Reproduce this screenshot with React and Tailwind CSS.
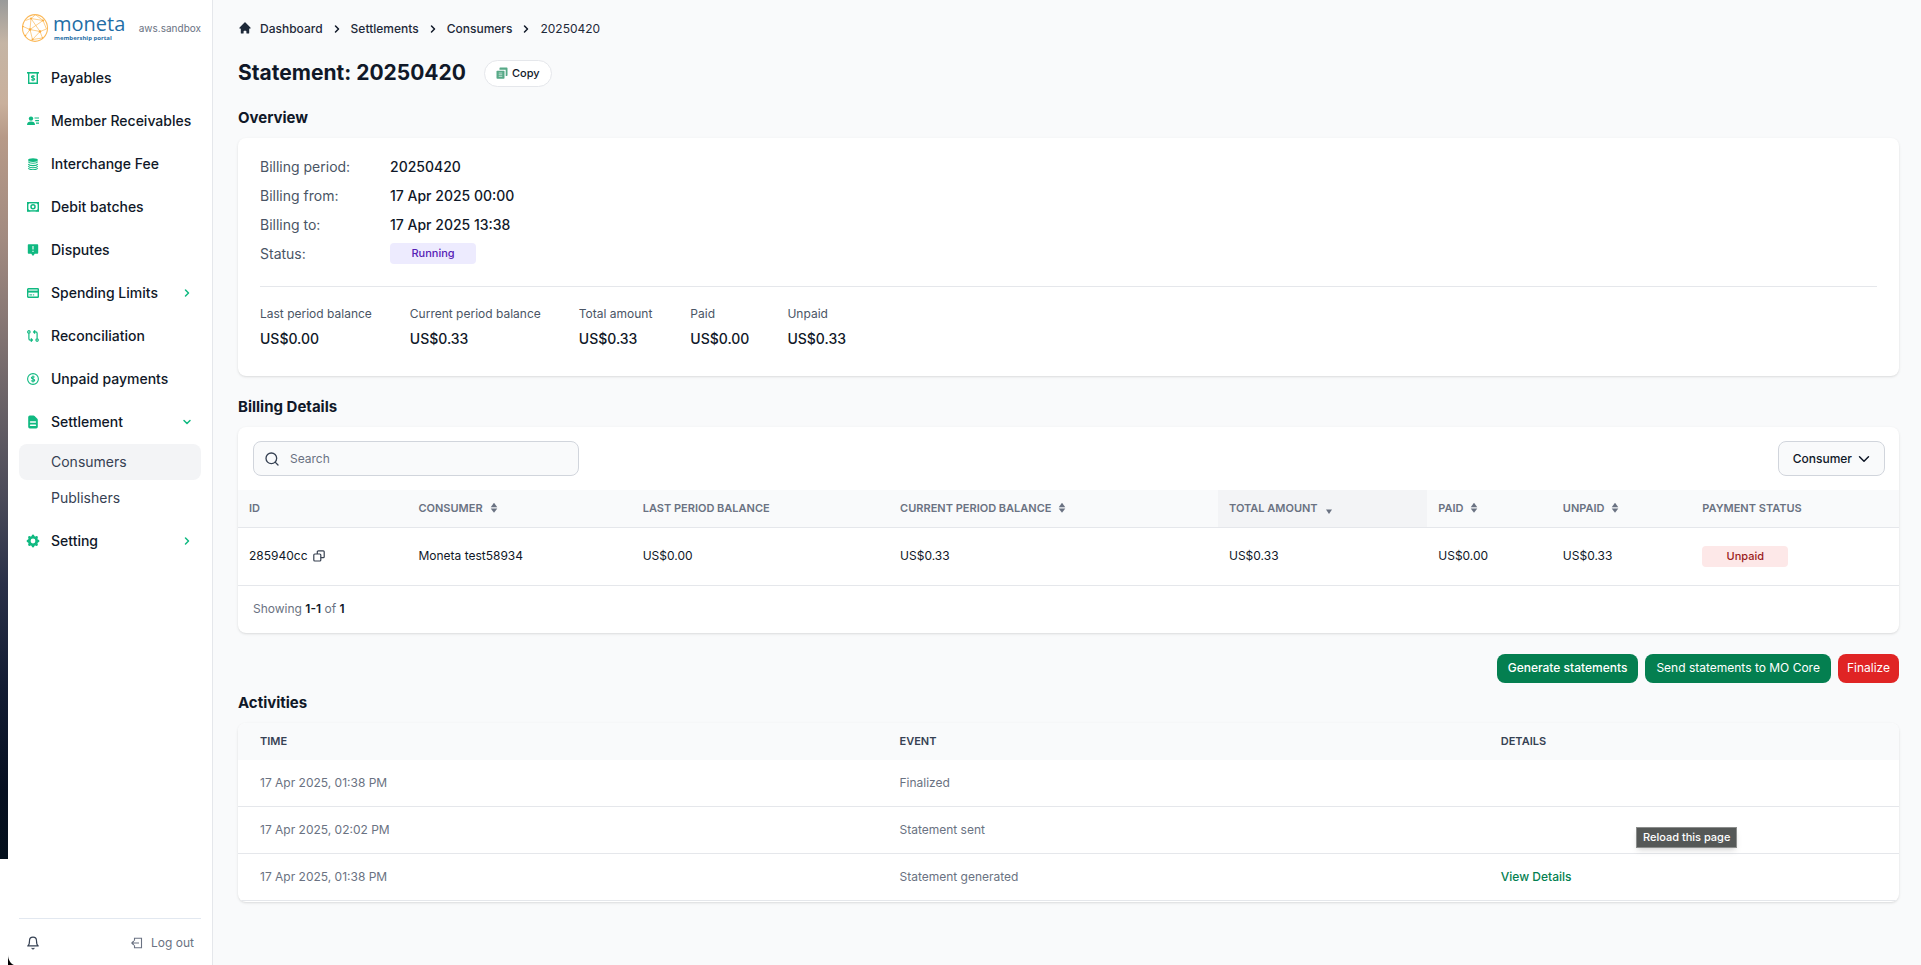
import { useState } from 'react';
import { HiCog, HiHome, HiDocumentText } from 'react-icons/hi';
import { LuBell, LuChevronDown, LuChevronRight, LuSearch } from 'react-icons/lu';

const ReceiptIcon = () => (
  <svg viewBox="0 0 12 12" className="size-3" fill="none" stroke="currentColor">
    <path d="M0 .8h12" strokeWidth="1.6" />
    <path d="M1.700 1v10.300h8.600V1" strokeWidth="1.400" />
    <path d="M7.700 4.500c-.5-.8-3.300-.9-3.300.4 0 1.400 3.300.9 3.300 2.300 0 1.300-3 1.200-3.500.3M6 3v6.200" strokeWidth="1.100" />
  </svg>
);

const MembersIcon = () => (
  <svg viewBox="0 0 12 12" className="size-3" fill="currentColor">
    <circle cx="4" cy="3.600" r="2.200" />
    <path d="M0 10c0-2.500 1.500-3.600 4-3.600S8 7.500 8 10z" />
    <path d="M7.500 2.400H12v1.200H7.500zM8.200 5H12v1.200H8.200zM9 7.600h3v1.200H9z" />
  </svg>
);

const CoinsIcon = () => (
  <svg viewBox="0 0 12 12" className="size-3" fill="none" stroke="currentColor">
    <ellipse cx="6" cy="2.100" rx="4.900" ry="1.900" fill="currentColor" stroke="none" />
    <path d="M1.400 3.700c.6 2.100 8.600 2.100 9.200 0M1.400 6c.6 2.100 8.600 2.100 9.200 0M1.400 8.200c.6 2.100 8.600 2.100 9.200 0M1.400 10.200c.6 2 8.600 2 9.200 0" strokeWidth="1.100" />
  </svg>
);

const CashIcon = () => (
  <svg viewBox="0 0 12 12" className="size-3" fill="none" stroke="currentColor">
    <rect x=".7" y="1.700" width="10.600" height="8.200" strokeWidth="1.400" />
    <circle cx="6" cy="5.800" r="2" strokeWidth="1.500" />
    <path d="M0 1h3.600L0 4.600zM12 1H8.400L12 4.600zM0 10.600h3.600L0 7zM12 10.600H8.400L12 7z" fill="currentColor" stroke="none" />
  </svg>
);

const DisputeIcon = () => (
  <svg viewBox="0 0 12 12" className="size-3">
    <path d="M1.800.2h8.400c.6 0 1 .4 1 1v7.600c0 .6-.4 1-1 1H7.800L6 12 4.200 9.800H1.800c-.6 0-1-.4-1-1V1.200c0-.6.4-1 1-1z" fill="currentColor" />
    <path d="M6 2v3.600M6 6.800v1.200" stroke="white" strokeWidth="1.100" />
  </svg>
);

const CardIcon = () => (
  <svg viewBox="0 0 12 12" className="size-3" fill="none" stroke="currentColor">
    <rect x=".7" y="1.700" width="10.600" height="8.600" rx=".6" strokeWidth="1.400" />
    <path d="M.6 4.600h10.800" strokeWidth="2" />
    <path d="M2.400 7.900h2.800M6 7.900h1.200" strokeWidth="1" />
  </svg>
);

const CompareIcon = () => (
  <svg viewBox="0 0 12 12" className="size-3" fill="none" stroke="currentColor" strokeWidth="1.200">
    <circle cx="1.900" cy="1.900" r="1.200" />
    <circle cx="10.100" cy="10.100" r="1.200" />
    <path d="M1.900 3.200v5.600c0 .8.500 1.300 1.300 1.300h1.600M3.900 8.500l1.500 1.600-1.500 1.600M10.100 8.800V3.200c0-.8-.5-1.300-1.300-1.300H7.200M8.100.3L6.600 1.900l1.500 1.600" />
  </svg>
);

const DollarIcon = () => (
  <svg viewBox="0 0 12 12" className="size-3" fill="none" stroke="currentColor">
    <circle cx="6" cy="6" r="5.400" strokeWidth="1.100" />
    <path d="M7.700 4.300c-.5-.8-3.300-.9-3.300.4 0 1.500 3.300 1 3.300 2.500 0 1.400-3 1.300-3.500.3M6 2.600v6.800" strokeWidth="1.100" />
  </svg>
);

const Globe = () => (
  <svg viewBox="0 0 28 28" className="size-7 shrink-0" fill="none" stroke="#fbb959">
    <ellipse cx="14" cy="14" rx="12.500" ry="13.400" strokeWidth="1.100" />
    <path d="M10 4.500L22 6.500l3.500 8.500-6.500 2.500L10 4.500M10 4.500L14.500.7 22 6.500M10 4.500L4.500 6.500M9 15.500l13-9M9 15.500l-7-3M9 15.500l10 2-7.500 8-2.500-10M9 15.500l-4.500 6M19 17.500l2.500 6.500-10 1.500M10 4.500l-1 11" strokeWidth=".7" />
    <g fill="#fbab3c" stroke="none">
      <circle cx="10" cy="4.500" r="1" />
      <circle cx="22" cy="6.500" r="1" />
      <circle cx="9" cy="15.500" r="1.300" />
      <circle cx="19" cy="17.500" r="1.200" />
      <circle cx="11.500" cy="25.500" r="1" />
      <circle cx="4.500" cy="21.500" r=".8" />
      <circle cx="2" cy="12.500" r=".8" />
      <circle cx="21.500" cy="24" r=".8" />
    </g>
  </svg>
);

const CopyFilledIcon = () => (
  <svg viewBox="0 0 12 12" className="size-3" fill="#57a987">
    <path d="M4.200.6h6.600c.4 0 .7.300.7.700v6.900c0 .4-.3.700-.7.700H9.700V2.800H3.500V1.300c0-.4.300-.7.700-.7z" />
    <rect x=".5" y="3.700" width="8" height="8" rx=".8" />
    <path d="M2.700 6h3.600M2.700 7.700h3.600M2.700 9.400h3.600" stroke="#b9dccd" strokeWidth="1" />
  </svg>
);

const DuplicateIcon = () => (
  <svg viewBox="0 0 12 12" className="size-3" fill="none" stroke="#374151" strokeWidth="1.200">
    <rect x=".8" y="4" width="7" height="7" rx="1" />
    <path d="M4.300 4V1.800c0-.6.4-1 1-1h4.900c.6 0 1 .4 1 1v4.900c0 .6-.4 1-1 1H7.800" />
  </svg>
);

const LogoutIcon = () => (
  <svg viewBox="0 0 12 12" className="size-3" fill="none" stroke="currentColor" strokeWidth="1.100">
    <path d="M3.500 3.800V1.200h7v9.600h-7V8.200M8 6H.8M2.800 4l-2 2 2 2" />
  </svg>
);

const SortIcon = ({ active }) => (
  <svg viewBox="0 0 8 12" className="h-3 w-2" fill="currentColor">
    {!active && <path d="M4 .8l3.300 4.400H.7z" />}
    {active ? <path d="M4 12L1 7.600h6z" /> : <path d="M4 10.800L.7 6.400h6.600z" />}
  </svg>
);

const menu = [
  { label: 'Payables', icon: <ReceiptIcon /> },
  { label: 'Member Receivables', icon: <MembersIcon /> },
  { label: 'Interchange Fee', icon: <CoinsIcon /> },
  { label: 'Debit batches', icon: <CashIcon /> },
  { label: 'Disputes', icon: <DisputeIcon /> },
  { label: 'Spending Limits', icon: <CardIcon />, children: [] },
  { label: 'Reconciliation', icon: <CompareIcon /> },
  { label: 'Unpaid payments', icon: <DollarIcon /> },
  { label: 'Settlement', icon: <HiDocumentText className="size-4 shrink-0" />, children: ['Consumers', 'Publishers'] },
  { label: 'Setting', icon: <HiCog className="size-4 shrink-0" />, children: [] },
];

const crumbs = ['Dashboard', 'Settlements', 'Consumers'];

const overview = [
  { label: 'Billing period:', value: '20250420' },
  { label: 'Billing from:', value: '17 Apr 2025 00:00' },
  { label: 'Billing to:', value: '17 Apr 2025 13:38' },
];

const totals = [
  { label: 'Last period balance', value: 'US$0.00' },
  { label: 'Current period balance', value: 'US$0.33' },
  { label: 'Total amount', value: 'US$0.33' },
  { label: 'Paid', value: 'US$0.00' },
  { label: 'Unpaid', value: 'US$0.33' },
];

const columns = [
  { label: 'ID', width: 'w-[10.2%]' },
  { label: 'Consumer', width: 'w-[13.5%]', sortable: true },
  { label: 'Last period balance', width: 'w-[15.5%]' },
  { label: 'Current period balance', width: 'w-[19.8%]', sortable: true },
  { label: 'Total amount', width: 'w-[12.6%]', sortable: true, active: true },
  { label: 'Paid', width: 'w-[7.5%]', sortable: true },
  { label: 'Unpaid', width: 'w-[8.4%]', sortable: true },
  { label: 'Payment status', width: 'w-[12.5%]' },
];

const activities = [
  { time: '17 Apr 2025, 01:38 PM', event: 'Finalized' },
  { time: '17 Apr 2025, 02:02 PM', event: 'Statement sent' },
  { time: '17 Apr 2025, 01:38 PM', event: 'Statement generated', details: true },
];

const Sidebar = () => {
  const [open, setOpen] = useState('Settlement');

  return (
    <aside className="flex w-[205px] shrink-0 flex-col border-r border-gray-200 bg-white px-[11px]">
      <div className="flex h-14 items-center justify-between pl-[2px]">
        <div className="flex items-center gap-1">
          <Globe />
          <div className="flex flex-col font-['Open_Sans',sans-serif] text-[#1f6ea6]">
            <span className="text-xl font-medium leading-[20px]">moneta</span>
            <span className="pl-px text-[6px] font-bold leading-[8px]">membership portal</span>
          </div>
        </div>
        <span className="text-[10px] text-gray-500">aws.sandbox</span>
      </div>

      <nav className="flex flex-col gap-[7px] pt-1">
        {menu.map((item) => (
          <div key={item.label}>
            <button
              onClick={() => item.children && setOpen(open === item.label ? '' : item.label)}
              className="flex h-9 w-full items-center rounded-lg pl-2 pr-2 text-left text-sm font-medium text-gray-900"
            >
              <span className="mr-3 flex w-3 shrink-0 items-center justify-center text-[#10b981]">{item.icon}</span>
              <span className="flex-1 whitespace-nowrap">{item.label}</span>
              {item.children && (
                <span className="text-[#10b981]">
                  {open === item.label ? (
                    <LuChevronDown className="size-3" strokeWidth={3} />
                  ) : (
                    <LuChevronRight className="size-3" strokeWidth={3} />
                  )}
                </span>
              )}
            </button>
            {open === item.label && item.children.length > 0 && (
              <div className="pt-1">
                {item.children.map((child) => (
                  <a
                    key={child}
                    href="#"
                    className={`flex h-9 items-center rounded-lg pl-8 text-sm text-gray-700 ${child === 'Consumers' ? 'bg-gray-100' : ''}`}
                  >
                    {child}
                  </a>
                ))}
              </div>
            )}
          </div>
        ))}
      </nav>

      <div className="mt-auto flex h-[47px] items-center justify-between border-t border-[#e2e8f0] pl-[7px] pr-[7px] pt-[2px] text-gray-500">
        <button aria-label="Notifications">
          <LuBell className="size-[14px] text-gray-700" />
        </button>
        <button className="flex items-center gap-2 text-[12px]">
          <LogoutIcon />
          <span>Log out</span>
        </button>
      </div>
    </aside>
  );
};

const SectionTitle = ({ children }) => <h2 className="text-[15px] font-bold leading-5 text-gray-900">{children}</h2>;

const App = () => {
  return (
    <div className="flex min-h-screen bg-gray-50 font-['Inter',sans-serif] text-gray-900">
      {/* Desktop wallpaper showing beside the window */}
      <div className="relative w-2 shrink-0 bg-white">
        <div className="h-[89vh] bg-[linear-gradient(180deg,#999a9a_0%,#c5b5a5_5%,#c9b09c_12%,#b79a88_16%,#a18a80_28%,#8b7a76_36%,#6c6468_46%,#4a4a58_58%,#2a3048_68%,#131c33_80%,#060f20_92%,#04101c_100%)]" />
        <svg viewBox="0 0 6 10" className="absolute bottom-0 left-2 h-[10px] w-[6px]">
          <path d="M0 0v10h6C3 9 0 5 0 0z" fill="#000" />
        </svg>
      </div>

      <Sidebar />

      <main className="min-w-0 flex-1 pl-[25px] pr-[22px] pt-[19px]">
        <nav className="flex h-5 items-center text-[12px]">
          <HiHome className="mb-[2px] mr-2 size-[14px] text-gray-800" />
          {crumbs.map((crumb) => (
            <span key={crumb} className="flex items-center">
              <a href="#" className="font-medium text-gray-800">{crumb}</a>
              <LuChevronRight className="mx-2 size-3" strokeWidth={3} />
            </span>
          ))}
          <span className="text-gray-800">20250420</span>
        </nav>

        <div className="mt-5 flex items-center gap-[18px]">
          <h1 className="text-[21px] font-bold leading-7">Statement: 20250420</h1>
          <button className="flex h-[27px] items-center gap-1 rounded-full border border-gray-200 bg-white px-[11px] text-[11px] font-medium">
            <CopyFilledIcon />
            Copy
          </button>
        </div>

        {/* Overview */}
        <div className="mt-[21px]">
          <SectionTitle>Overview</SectionTitle>
        </div>
        <section className="mt-[10px] rounded-lg bg-white px-[22px] pb-[27px] pt-[14px] shadow-sm">
          <dl className="grid grid-cols-[130px_1fr] text-sm leading-[29px]">
            {overview.map((row) => (
              <div key={row.label} className="contents">
                <dt className="text-gray-600">{row.label}</dt>
                <dd className="font-medium">{row.value}</dd>
              </div>
            ))}
            <dt className="text-gray-600">Status:</dt>
            <dd className="flex items-center">
              <span className="w-[86px] rounded bg-[#edebfe] text-center text-[11px] font-medium leading-[21px] text-[#5521b5]">Running</span>
            </dd>
          </dl>
          <hr className="mt-[18px] border-gray-200" />
          <dl className="mt-[17px] flex gap-[38px]">
            {totals.map((total) => (
              <div key={total.label}>
                <dt className="text-[12px] leading-5 text-gray-600">{total.label}</dt>
                <dd className="mt-[5px] text-sm font-medium leading-5">{total.value}</dd>
              </div>
            ))}
          </dl>
        </section>

        {/* Billing details */}
        <div className="mt-[21px]">
          <SectionTitle>Billing Details</SectionTitle>
        </div>
        <section className="mt-[10px] overflow-hidden rounded-lg bg-white shadow-sm">
          <div className="flex items-center justify-between py-[14px] pl-[15px] pr-[14px]">
            <label className="flex h-[35px] w-[326px] items-center gap-[10px] rounded-lg border border-gray-300 bg-gray-50 px-[10px]">
              <LuSearch className="size-4 text-gray-700" />
              <input
                type="text"
                placeholder="Search"
                aria-label="Search"
                className="min-w-0 flex-1 bg-transparent text-[12px] outline-none placeholder:text-gray-500"
              />
            </label>
            <button className="flex h-[35px] items-center gap-[3px] rounded-lg border border-gray-300 bg-gray-50 pl-[14px] pr-[11px] text-[12px] font-medium">
              Consumer
              <LuChevronDown className="size-[18px]" />
            </button>
          </div>

          <table className="w-full table-fixed text-left">
            <thead className="bg-gray-50 text-[11px] uppercase text-gray-500">
              <tr className="h-[37px] border-b border-gray-200">
                {columns.map((col) => (
                  <th key={col.label} className={`${col.width} px-[11px] font-semibold ${col.active ? 'bg-gray-100' : ''}`}>
                    <span className="flex items-center gap-[7px] whitespace-nowrap">
                      {col.label}
                      {col.sortable && <SortIcon active={col.active} />}
                    </span>
                  </th>
                ))}
              </tr>
            </thead>
            <tbody className="text-[12px]">
              <tr className="h-[58px] border-b border-gray-200">
                <td className="px-[11px]">
                  <span className="flex items-center gap-[5px]">
                    285940cc
                    <button aria-label="Copy ID">
                      <DuplicateIcon />
                    </button>
                  </span>
                </td>
                <td className="px-[11px]">Moneta test58934</td>
                <td className="px-[11px]">US$0.00</td>
                <td className="px-[11px]">US$0.33</td>
                <td className="px-[11px]">US$0.33</td>
                <td className="px-[11px]">US$0.00</td>
                <td className="px-[11px]">US$0.33</td>
                <td className="px-[11px]">
                  <span className="block w-[86px] rounded bg-[#fde8e8] text-center text-[11px] font-medium leading-[21px] text-[#9b1c1c]">Unpaid</span>
                </td>
              </tr>
            </tbody>
          </table>
          <p className="px-[15px] pb-[2px] text-[12px] leading-[45px] text-gray-500">
            Showing <span className="font-semibold text-gray-900">1-1</span> of <span className="font-semibold text-gray-900">1</span>
          </p>
        </section>

        <div className="mt-[21px] flex justify-end gap-[7px] text-[12px] text-white">
          <button className="h-[29px] rounded-lg bg-[#047f50] px-[11px] font-medium">Generate statements</button>
          <button className="h-[29px] rounded-lg bg-[#047f50] px-[11px]">Send statements to MO Core</button>
          <button className="h-[29px] rounded-lg bg-[#e02424] px-[9px]">Finalize</button>
        </div>

        {/* Activities */}
        <div className="mt-[10px]">
          <SectionTitle>Activities</SectionTitle>
        </div>
        <section className="mt-[10px] overflow-hidden rounded-lg bg-white pb-px shadow-sm">
          <table className="w-full table-fixed text-left text-[12px] text-gray-500">
            <thead className="bg-gray-50 text-[11px] uppercase text-gray-700">
              <tr className="h-[37px]">
                <th className="w-[38.5%] px-[22px] font-semibold">Time</th>
                <th className="w-[36.2%] px-[22px] font-semibold">Event</th>
                <th className="px-[22px] font-semibold">Details</th>
              </tr>
            </thead>
            <tbody>
              {activities.map((activity) => (
                <tr key={activity.event} className="h-[47px] border-b border-gray-200">
                  <td className="px-[22px]">{activity.time}</td>
                  <td className="px-[22px]">{activity.event}</td>
                  <td className="px-[22px]">
                    {activity.details && <a href="#" className="font-medium text-[#047f50]">View Details</a>}
                  </td>
                </tr>
              ))}
            </tbody>
          </table>
        </section>
      </main>

      {/* Browser tooltip */}
      <div
        role="tooltip"
        className="absolute left-[1636px] top-[827px] border border-[#8b8d8c] bg-[#555857] px-[6px] text-[11px] font-medium leading-[19px] text-white shadow-md"
      >
        Reload this page
      </div>
    </div>
  );
};

export default App;
